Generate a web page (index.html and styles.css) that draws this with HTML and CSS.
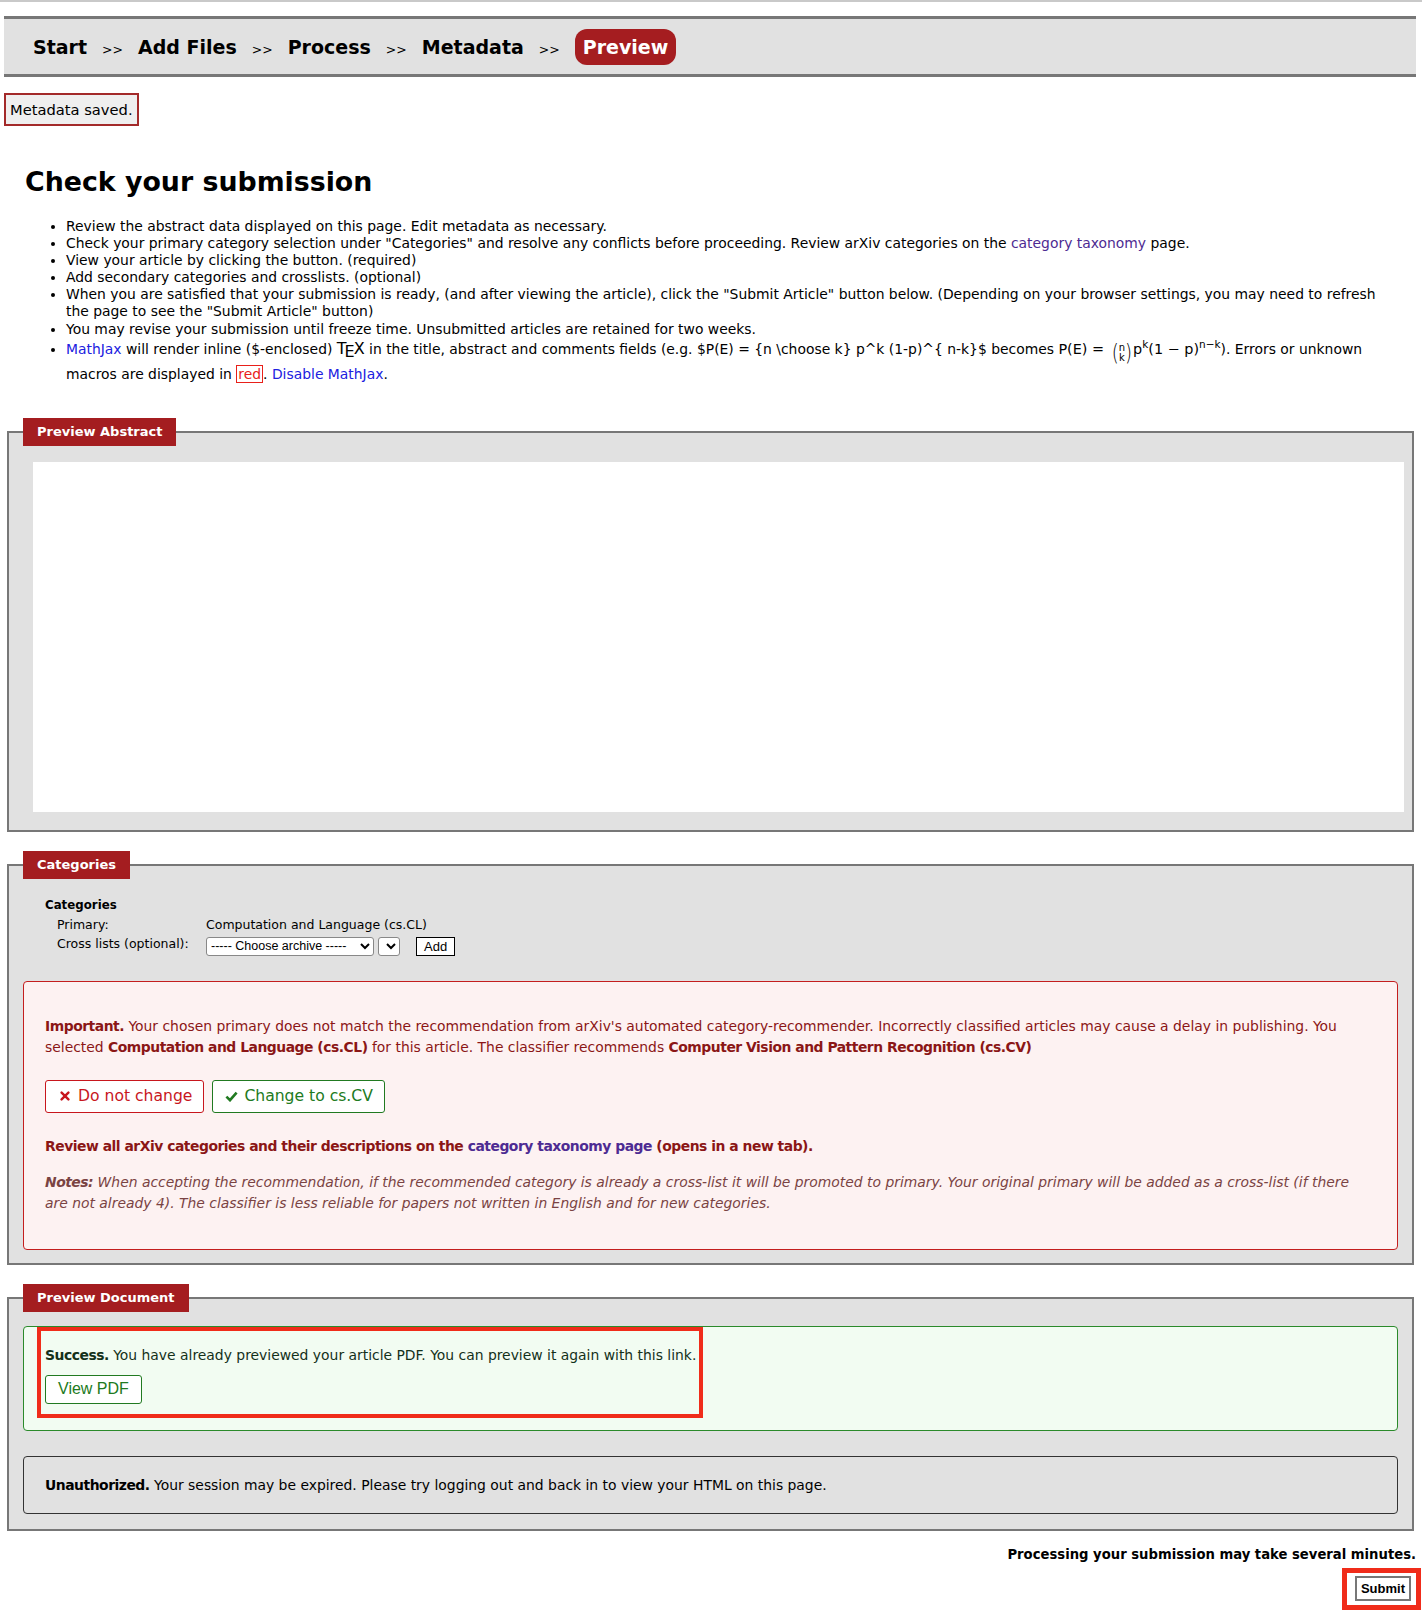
FILE: index.html
```html
<!DOCTYPE html>
<html>
<head>
    <title>Preview - arXiv submission</title>
    <link rel="stylesheet" href="styles.css">
</head>
<body>
    <div class="topline"></div>

    <!-- Progress steps -->
    <nav class="steps">
        <span class="step">Start</span><span class="sep">&gt;&gt;</span>
        <span class="step">Add Files</span><span class="sep">&gt;&gt;</span>
        <span class="step">Process</span><span class="sep">&gt;&gt;</span>
        <span class="step">Metadata</span><span class="sep">&gt;&gt;</span>
        <span class="step current">Preview</span>
    </nav>

    <div class="flash">Metadata saved.</div>

    <div class="content">
        <h1>Check your submission</h1>
        <ul class="checklist">
            <li>Review the abstract data displayed on this page. Edit metadata as necessary.</li>
            <li>Check your primary category selection under "Categories" and resolve any conflicts before proceeding. Review arXiv categories on the <a href="#" class="visited">category taxonomy</a> page.</li>
            <li>View your article by clicking the button. (required)</li>
            <li>Add secondary categories and crosslists. (optional)</li>
            <li>When you are satisfied that your submission is ready, (and after viewing the article), click the "Submit Article" button below. (Depending on your browser settings, you may need to refresh the page to see the "Submit Article" button)</li>
            <li>You may revise your submission until freeze time. Unsubmitted articles are retained for two weeks.</li>
            <li class="mathjax-note"><a href="#" class="link">MathJax</a> will render inline ($-enclosed) <span class="tex">T<span class="tex-e">E</span>X</span> in the title, abstract and comments fields (e.g. $P(E) = {n \choose k} p^k (1-p)^{ n-k}$ becomes <span class="math">P(E) = <span class="binom"><span class="paren">(</span><span class="stack"><span>n</span><span>k</span></span><span class="paren">)</span></span>p<sup>k</sup>(1 − p)<sup>n−k</sup></span>). Errors or unknown macros are displayed in <span class="err">red</span>. <a href="#" class="link">Disable MathJax</a>.</li>
        </ul>
    </div>

    <!-- Abstract preview -->
    <fieldset class="panel panel-abstract">
        <legend>Preview Abstract</legend>
        <div class="abstract-frame"></div>
    </fieldset>

    <!-- Categories -->
    <fieldset class="panel panel-cats">
        <legend>Categories</legend>
        <div class="cat-block">
            <div class="cat-title">Categories</div>
            <div class="cat-grid">
                <span>Primary:</span>
                <span>Computation and Language (cs.CL)</span>
                <span>Cross lists (optional):</span>
                <span class="cross">
                    <select class="archive"><option>----- Choose archive -----</option></select>
                    <select class="sub"><option></option></select>
                    <button class="add">Add</button>
                </span>
            </div>
        </div>

        <div class="warning">
            <p><b>Important.</b> Your chosen primary does not match the recommendation from arXiv's automated category-recommender. Incorrectly classified articles may cause a delay in publishing. You selected <b>Computation and Language (cs.CL)</b> for this article. The classifier recommends <b>Computer Vision and Pattern Recognition (cs.CV)</b></p>
            <div class="choices">
                <button class="btn btn-keep">
                    <svg width="10" height="10" viewBox="0 0 10 10"><path d="M1.6 1.6 L8.4 8.4 M8.4 1.6 L1.6 8.4" stroke="currentColor" stroke-width="2.4" stroke-linecap="round"/></svg>
                    Do not change
                </button>
                <button class="btn btn-change">
                    <svg width="13" height="11" viewBox="0 0 13 11"><path d="M1.4 5.6 L5 9.2 L11.6 1.6" fill="none" stroke="currentColor" stroke-width="2.6"/></svg>
                    Change to cs.CV
                </button>
            </div>
            <p class="review"><b>Review all arXiv categories and their descriptions on the <a href="#" class="visited">category taxonomy page</a> (opens in a new tab).</b></p>
            <p class="notes"><b>Notes:</b> When accepting the recommendation, if the recommended category is already a cross-list it will be promoted to primary. Your original primary will be added as a cross-list (if there are not already 4). The classifier is less reliable for papers not written in English and for new categories.</p>
        </div>
    </fieldset>

    <!-- Document preview -->
    <fieldset class="panel panel-doc">
        <legend>Preview Document</legend>
        <div class="success">
            <div class="mark">
                <p><b>Success.</b> You have already previewed your article PDF. You can preview it again with this link.</p>
                <button class="view-pdf">View PDF</button>
            </div>
        </div>
        <div class="unauth">
            <b>Unauthorized.</b> Your session may be expired. Please try logging out and back in to view your HTML on this page.
        </div>
    </fieldset>

    <div class="submit-row">
        <p>Processing your submission may take several minutes.</p>
        <span class="mark-submit"><button class="submit">Submit</button></span>
    </div>
</body>
</html>
```

FILE: styles.css
```css
body {
    margin: 0;
    font-family: "DejaVu Sans", "Lucida Grande", sans-serif;
    font-size: 13.9px;
    color: #000;
    background: #fff;
}
b {
    letter-spacing: -0.48px;
}
.topline {
    height: 2px;
    background: #c9c9c9;
}

/* progress steps */
.steps {
    display: flex;
    align-items: center;
    height: 55px;
    margin: 14px 6px 0 4px;
    padding-left: 29px;
    background: #e1e1e1;
    border-top: 3px solid #777;
    border-bottom: 3px solid #777;
}
.step {
    font-size: 19px;
    font-weight: bold;
    line-height: 22px;
}
.sep {
    margin: 5px 15px 0 15px;
    font-size: 12.5px;
}
.step.current {
    padding: 7px 8px;
    background: #a51d20;
    color: #fff;
    border-radius: 12px;
}

.flash {
    width: fit-content;
    margin: 16px 0 0 4px;
    padding: 5px 4px;
    border: 2px solid #a32a2a;
    background: #efefef;
    font-size: 14.7px;
    line-height: 19px;
}

.content {
    margin: 0 30px 0 25px;
}
h1 {
    margin: 40px 0 21px;
    font-size: 26.8px;
    line-height: 31px;
}
.checklist {
    margin: 0;
    padding-left: 41px;
    line-height: 17.1px;
}
.checklist .mathjax-note {
    line-height: 22px;
}
a.visited {
    color: #4d2b92;
    text-decoration: none;
}
a.link {
    color: #2020e0;
    text-decoration: none;
}
.tex {
    font-size: 16px;
}
.tex-e {
    position: relative;
    top: 3px;
    margin: 0 -1px 0 -2px;
}
.math {
    font-size: 14.4px;
}
.binom {
    display: inline-flex;
    align-items: center;
    vertical-align: -5px;
    margin: 0 1px 0 3px;
}
.paren {
    font-size: 18px;
    line-height: 20px;
    font-weight: 300;
    transform: scaleY(1.3);
}
.stack {
    display: flex;
    flex-direction: column;
    font-size: 10px;
    line-height: 10px;
    text-align: center;
}
.math sup {
    font-size: 10.5px;
    line-height: 0;
}
.err {
    color: #e8201a;
    border: 1px solid #e8201a;
    padding: 0 1px;
}

/* panels */
.panel {
    min-inline-size: 0;
    margin: 19px 8px 0 7px;
    padding: 16px 14px 18px;
    border: 2px solid #777;
    background: #e1e1e1;
}
.panel-abstract {
    margin-top: 33px;
}
.panel legend {
    padding: 5px 14px 6px;
    background: #a41d20;
    color: #fff;
    font-size: 13px;
    font-weight: bold;
    line-height: 17px;
}
.abstract-frame {
    height: 350px;
    margin: 0 -6px 0 10px;
    background: #fff;
}

.panel-cats {
    padding-top: 17px;
    padding-bottom: 13px;
}
.cat-block {
    margin: 0 22px;
    font-size: 12.5px;
    line-height: 19px;
}
.cat-title {
    font-weight: bold;
    font-size: 11.8px;
}
.cat-grid {
    display: grid;
    grid-template-columns: 149px auto;
    padding-left: 12px;
}
.cross {
    display: flex;
    align-items: center;
    gap: 4px;
    padding-top: 3px;
}
.cross select {
    height: 19px;
    font-family: "Liberation Sans", Arial, sans-serif;
    font-size: 12.5px;
    border: 1px solid #888;
    border-radius: 3px;
    background: #fff;
    color: #000;
}
.cross .archive {
    width: 168px;
}
.cross .sub {
    width: 22px;
}
.cross .add {
    height: 19px;
    margin-left: 12px;
    padding: 0 7px;
    font-family: "Liberation Sans", Arial, sans-serif;
    font-size: 13px;
    background: #fff;
    border: 1px solid #000;
}

.warning {
    margin-top: 25px;
    padding: 34px 26px 35px 21px;
    border: 1px solid #c41e1e;
    border-radius: 4px;
    background: #fdf2f2;
    color: #8b1616;
    line-height: 21px;
}
.warning p {
    margin: 0;
}
.choices {
    display: flex;
    gap: 8px;
    margin: 22px 0 23px;
}
.btn {
    display: inline-flex;
    align-items: center;
    gap: 8px;
    height: 33px;
    padding: 0 11px 0 14px;
    font-family: "DejaVu Sans", "Lucida Grande", sans-serif;
    font-size: 15.6px;
    background: #fff;
    border: 1px solid;
    border-radius: 3px;
}
.btn-keep {
    color: #c8161d;
    border-color: #c8161d;
}
.btn-change {
    gap: 6px;
    padding-left: 12px;
    color: #217a21;
    border-color: #217a21;
}
.warning .review {
    margin-bottom: 15px;
}
.warning .notes {
    font-style: italic;
    color: #7a4343;
}

.panel-doc {
    padding-top: 14px;
    padding-bottom: 15px;
}
.success {
    padding: 19px 21px 26px;
    border: 1px solid #2b8a2b;
    border-radius: 4px;
    background: #f2fcf2;
    color: #14301a;
    line-height: 19px;
}
.success p {
    margin: 0 0 10px;
}
.mark {
    width: fit-content;
    padding: 15px 3px 10px 4px;
    margin: -15px -3px -10px -4px;
    outline: 4px solid #f02c1a;
}
.view-pdf {
    height: 29px;
    padding: 0 12px;
    font-family: "Liberation Sans", Arial, sans-serif;
    font-size: 16px;
    color: #217a21;
    background: #fff;
    border: 1px solid #217a21;
    border-radius: 3px;
}
.unauth {
    margin-top: 25px;
    padding: 19px 21px 18px;
    border: 1px solid #333;
    border-radius: 4px;
    line-height: 19px;
}

.submit-row {
    margin-right: 6px;
    text-align: right;
}
.submit-row p {
    margin: 15px 0 5px;
    font-size: 13.2px;
    font-weight: bold;
    line-height: 17px;
}
.mark-submit {
    display: inline-block;
    margin-right: -5px;
    padding: 3px 5px 4px 8px;
    border: 5px solid #f02c1a;
}
.submit {
    display: block;
    height: 25px;
    padding: 0 4px;
    font-family: "Liberation Sans", Arial, sans-serif;
    font-size: 13px;
    font-weight: bold;
    background: #fff;
    border: 2px solid #777;
}
```
